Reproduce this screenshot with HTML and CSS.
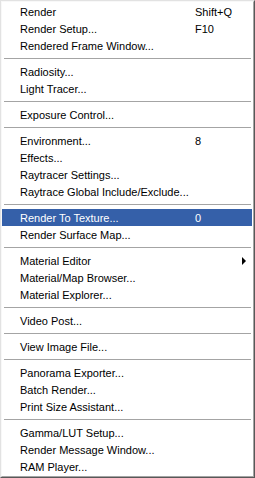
FILE: index.html
```html
<!DOCTYPE html>
<html>
<head>
<meta charset="utf-8">
<link rel="stylesheet" href="styles.css">
</head>
<body>
<div class="menu">
  <div class="menu-inner">
    <div class="item"><span class="label">Render</span><span class="key">Shift+Q</span></div>
    <div class="item"><span class="label">Render Setup...</span><span class="key">F10</span></div>
    <div class="item"><span class="label">Rendered Frame Window...</span></div>
    <div class="sep"></div>
    <div class="item"><span class="label">Radiosity...</span></div>
    <div class="item"><span class="label">Light Tracer...</span></div>
    <div class="sep"></div>
    <div class="item"><span class="label">Exposure Control...</span></div>
    <div class="sep"></div>
    <div class="item"><span class="label">Environment...</span><span class="key">8</span></div>
    <div class="item"><span class="label">Effects...</span></div>
    <div class="item"><span class="label">Raytracer Settings...</span></div>
    <div class="item"><span class="label">Raytrace Global Include/Exclude...</span></div>
    <div class="sep"></div>
    <div class="item active"><span class="label">Render To Texture...</span><span class="key">0</span></div>
    <div class="item"><span class="label">Render Surface Map...</span></div>
    <div class="sep"></div>
    <div class="item"><span class="label">Material Editor</span><span class="arrow"></span></div>
    <div class="item"><span class="label">Material/Map Browser...</span></div>
    <div class="item"><span class="label">Material Explorer...</span></div>
    <div class="sep"></div>
    <div class="item"><span class="label">Video Post...</span></div>
    <div class="sep"></div>
    <div class="item"><span class="label">View Image File...</span></div>
    <div class="sep"></div>
    <div class="item"><span class="label">Panorama Exporter...</span></div>
    <div class="item"><span class="label">Batch Render...</span></div>
    <div class="item"><span class="label">Print Size Assistant...</span></div>
    <div class="sep"></div>
    <div class="item"><span class="label">Gamma/LUT Setup...</span></div>
    <div class="item"><span class="label">Render Message Window...</span></div>
    <div class="item"><span class="label">RAM Player...</span></div>
  </div>
</div>
</body>
</html>
```
FILE: styles.css
```css
html, body {
  margin: 0;
  padding: 0;
  background: #ffffff;
}
.menu {
  width: 255px;
  height: 478px;
  box-sizing: border-box;
  border-top: 1px solid #e2e2e2;
  border-left: 1px solid #e2e2e2;
  border-right: 1px solid #585858;
  border-bottom: 1px solid #585858;
  background: #ffffff;
}
.menu-inner {
  height: 100%;
  box-sizing: border-box;
  border-top: 1px solid #f8f8f8;
  border-left: 1px solid #f8f8f8;
  border-right: 1px solid #a4a4a4;
  border-bottom: 1px solid #a4a4a4;
  padding: 1px 1px 1px 0;
  display: flex;
  flex-direction: column;
  font-family: "Liberation Sans", Arial, sans-serif;
  font-size: 11px;
  color: #000000;
}
.item {
  height: 17px;
  display: grid;
  grid-template-columns: 175px 1fr;
  align-items: center;
  padding: 0 6px 0 18px;
  white-space: nowrap;
}
.item.active {
  background: #3560a9;
  color: #ffffff;
}
.key {
  justify-self: start;
}
.arrow {
  justify-self: end;
  width: 0;
  height: 0;
  border-top: 4px solid transparent;
  border-bottom: 4px solid transparent;
  border-left: 4px solid #000000;
}
.sep {
  height: 9px;
  box-sizing: border-box;
  padding-top: 4px;
  margin: 0 1px 0 2px;
}
.sep::before {
  content: "";
  display: block;
  height: 1px;
  background: #a4a4a4;
}
```
